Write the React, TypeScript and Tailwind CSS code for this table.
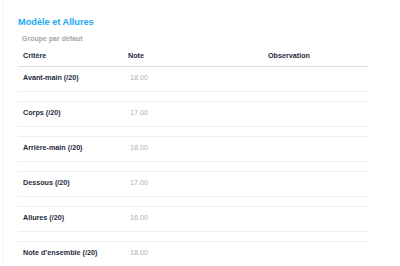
const rows = [
  { label: "Avant-main (/20)", note: "18.00" },
  { label: "Corps (/20)", note: "17.00" },
  { label: "Arrière-main (/20)", note: "18.00" },
  { label: "Dessous (/20)", note: "17.00" },
  { label: "Allures (/20)", note: "16.00" },
  { label: "Note d’ensemble (/20)", note: "18.00" },
];

export default function App() {
  return (
    <div className="h-[266px] w-[400px] overflow-hidden bg-white pl-[3px] font-['Liberation_Sans',Arial,sans-serif]">
      <div className="h-full border-l border-[#f3f3f5] pl-[14px] pt-[16px]">
        <h2 className="text-[9.2px] font-bold leading-[12px] text-[#1ba8f4]">Modèle et Allures</h2>
        <div className="mt-[6px] pl-[4px] text-[7px] font-bold leading-[10px] text-[#a6a6a6]">Groupe par défaut</div>
        <table className="mt-[3px] w-[350px] table-fixed border-collapse text-left">
          <colgroup>
            <col className="w-[105px]" />
            <col className="w-[140px]" />
            <col />
          </colgroup>
          <thead>
            <tr className="h-[19px] border-b border-[#dcdce3] text-[7.2px] font-bold text-[#1e2b3c]">
              <th className="pb-[4px] pl-[5px] align-bottom">Critère</th>
              <th className="pb-[4px] pl-[5px] align-bottom">Note</th>
              <th className="pb-[4px] pl-[5px] align-bottom">Observation</th>
            </tr>
          </thead>
          <tbody>
            {rows.map((r) => (
              <>
                <tr key={r.label} className="h-[25px] border-b border-[#efeff1] text-[7.2px]">
                  <td className="pl-[5px] font-bold text-[#1e2b3c]">{r.label}</td>
                  <td className="pl-[7px] text-[#b0b0b0]">{r.note}</td>
                  <td />
                </tr>
                <tr key={r.label + "-s"} className="h-[10px] border-b border-[#efeff1]">
                  <td colSpan={3} />
                </tr>
              </>
            ))}
          </tbody>
        </table>
      </div>
    </div>
  );
}
